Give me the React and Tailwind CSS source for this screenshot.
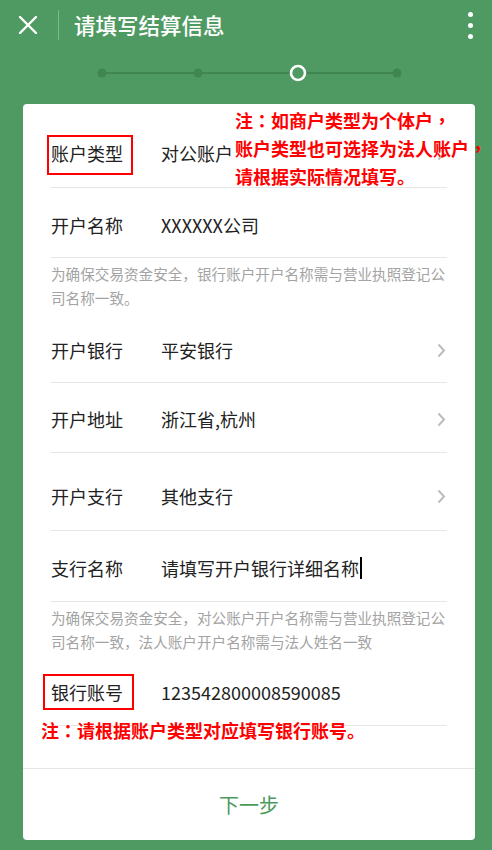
const font = "font-['Noto_Sans_CJK_SC','Noto_Sans',sans-serif]"
const tc = "font-['Noto_Sans_CJK_TC',sans-serif]"

function Chevron() {
  return (
    <svg width="9" height="15" viewBox="0 0 9 15" className="mr-[1px]">
      <path d="M1.5 1.5 L7 7.5 L1.5 13.5" fill="none" stroke="#bcbcbc" strokeWidth="2" />
    </svg>
  )
}

function Row({ label, value, arrow, h, pt = 0, cursor }) {
  return (
    <div className="flex items-center border-b border-[#e6e6e6]" style={{ height: h, paddingTop: pt }}>
      <span className="w-[110px] shrink-0 text-[18px] text-[#222]">{label}</span>
      <span className="flex-1 flex items-center text-[18px] text-[#222]">
        {value}
        {cursor && <span className="ml-px inline-block w-[2px] h-[22px] bg-black" />}
      </span>
      {arrow && <Chevron />}
    </div>
  )
}

function Help({ children, h }) {
  return (
    <div className="pt-[4px] text-[14.6px] leading-[24px] text-[#a3a3a3]" style={{ height: h }}>
      {children}
    </div>
  )
}

export default function App() {
  return (
    <div className={`${font} w-[492px] h-[850px] bg-[#4f9a62] relative overflow-hidden`}>
      {/* top bar */}
      <div className="h-[50px] flex items-center">
        <div className="w-[58px] flex justify-center">
          <svg width="20" height="20" viewBox="0 0 20 20" className="-ml-[2px]">
            <path d="M2 2 L18 18 M18 2 L2 18" stroke="white" strokeWidth="2.4" strokeLinecap="round" />
          </svg>
        </div>
        <div className="w-px h-[30px] bg-[#7fb78f]" />
        <h1 className="ml-[15px] text-[21.5px] text-white font-medium flex-1">请填写结算信息</h1>
        <div className="w-[44px] flex flex-col items-center gap-[6px]">
          <span className="w-[5px] h-[5px] rounded-full bg-white" />
          <span className="w-[5px] h-[5px] rounded-full bg-white" />
          <span className="w-[5px] h-[5px] rounded-full bg-white" />
        </div>
      </div>

      {/* steps */}
      <div className="h-[54px]">
        <svg width="492" height="54" viewBox="0 0 492 54">
          <line x1="102" y1="23" x2="397" y2="23" stroke="#3f8650" strokeWidth="2" />
          <circle cx="102" cy="23" r="4.5" fill="#3f8650" />
          <circle cx="198" cy="23" r="4.5" fill="#3f8650" />
          <circle cx="298" cy="23" r="7" fill="#4f9a62" stroke="white" strokeWidth="2.6" />
          <circle cx="397" cy="23" r="4.5" fill="#3f8650" />
        </svg>
      </div>

      {/* card */}
      <div className="ml-[23px] w-[452px] bg-white rounded-[4px] flex flex-col">
        <div className="px-[28px] pt-[14px]">
          <Row label="账户类型" value="对公账户" arrow h={70} pt={2} />
          <Row label="开户名称" value="XXXXXX公司" h={70} pt={6} />
          <Help h={58}>为确保交易资金安全，银行账户开户名称需与营业执照登记公司名称一致。</Help>
          <Row label="开户银行" value="平安银行" arrow h={67} pt={2} />
          <Row label="开户地址" value="浙江省,杭州" arrow h={70} pt={4} />
          <Row label="开户支行" value="其他支行" arrow h={78} pt={10} />
          <Row label="支行名称" value="请填写开户银行详细名称" cursor h={71} pt={4} />
          <Help h={53}>为确保交易资金安全，对公账户开户名称需与营业执照登记公司名称一致，法人账户开户名称需与法人姓名一致</Help>
          <Row label="银行账号" value="123542800008590085" h={71} pt={4} />
          <div className="h-[42px]" />
        </div>
        <div className="border-t border-[#e6e6e6] h-[72px] flex items-center justify-center">
          <span className="text-[20px] text-[#4a9a5c]">下一步</span>
        </div>
      </div>

      {/* annotations */}
      <div className="absolute left-[47px] top-[135px] w-[86px] h-[40px] border-2 border-[#ff0000]" />
      <div className="absolute left-[43px] top-[674px] w-[91px] h-[36px] border-2 border-[#ff0000]" />
      <div className="absolute left-[235px] top-[106px] text-[18px] leading-[28px] font-bold text-[#ff0000] whitespace-nowrap">
        <div>注<span className={tc}>：</span>如商户类型为个体户<span className={tc}>，</span></div>
        <div>账户类型也可选择为法人账户<span className={tc}>，</span></div>
        <div>请根据实际情况填写。</div>
      </div>
      <div className="absolute left-[41px] top-[716px] text-[18px] leading-[28px] font-bold text-[#ff0000] whitespace-nowrap">
        注<span className={tc}>：</span>请根据账户类型对应填写银行账号。
      </div>
    </div>
  )
}
